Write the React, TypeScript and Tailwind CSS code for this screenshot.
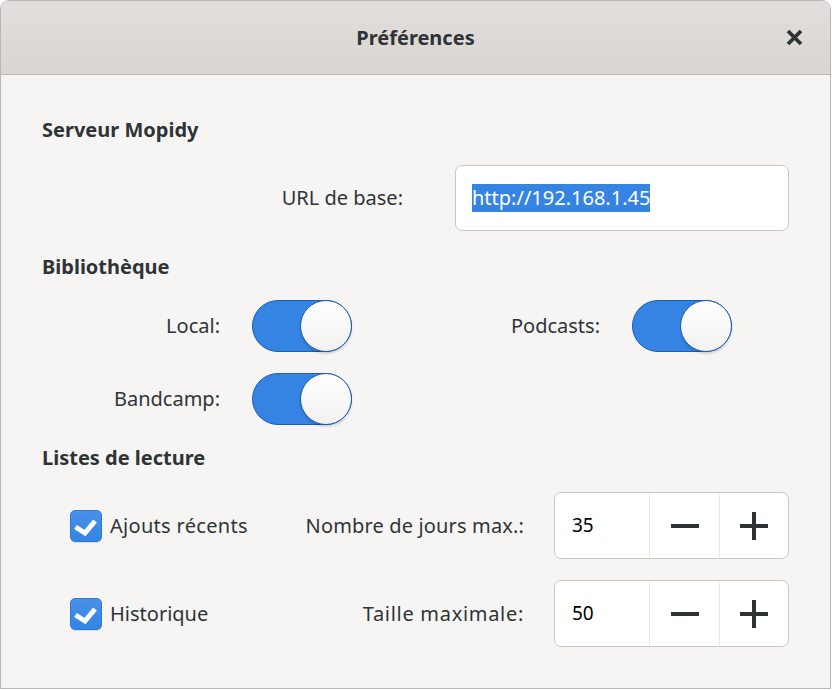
import React from "react";

const font = { fontFamily: '"Noto Sans", "Open Sans", sans-serif' };

function Switch() {
  return (
    <div className="relative w-[100px] h-[52px] rounded-full bg-[#3584e4] border border-[#1a5fb4] shrink-0">
      <div className="absolute right-[-1px] top-[-1px] w-[52px] h-[52px] rounded-full bg-gradient-to-b from-white to-[#f2f1f0] border border-[#1a5fb4] shadow-[0_2px_2px_rgba(0,0,0,0.15)]" />
    </div>
  );
}

function Check() {
  return (
    <div className="w-[32px] h-[32px] rounded-[5px] bg-gradient-to-b from-[#4a90e9] to-[#3584e4] border border-[#2f7bd8] shadow-[0_1px_1px_rgba(0,0,0,0.1)] shrink-0">
      <svg width="30" height="30" viewBox="0 0 30 30">
        <path d="M4.5 16 L14 22 L24 10" fill="none" stroke="white" strokeWidth="5" strokeLinejoin="miter" />
      </svg>
    </div>
  );
}

function Spin({ value }: { value: string }) {
  return (
    <div className="ml-[30px] w-[235px] h-[67px] flex rounded-[7px] border border-[#cdc7c2] bg-white overflow-hidden">
      <div className="w-[94px] flex items-center pl-[17px] text-[19px] text-black">{value}</div>
      <div className="w-[70px] border-l border-[#ebe9e7] flex items-center justify-center">
        <svg width="30" height="30" viewBox="0 0 30 30">
          <rect x="1" y="13" width="28" height="4" fill="#2e3436" />
        </svg>
      </div>
      <div className="flex-1 border-l border-[#ebe9e7] flex items-center justify-center">
        <svg width="30" height="30" viewBox="0 0 30 30">
          <rect x="1" y="13" width="28" height="4" fill="#2e3436" />
          <rect x="13" y="1" width="4" height="28" fill="#2e3436" />
        </svg>
      </div>
    </div>
  );
}

export default function App() {
  return (
    <div className="w-[832px] h-[690px] bg-white text-[#2e3436]" style={font}>
      <div className="w-[831px] h-[689px] border border-[#b9b7b4] rounded-t-[9px] overflow-hidden bg-[#f6f5f4] flex flex-col">
        {/* header */}
        <div className="relative h-[74px] shrink-0 border-b border-[#bfb8b1] bg-gradient-to-b from-[#e1dedb] to-[#dad6d2] flex items-center justify-center">
          <span className="text-[20px] font-bold">Préférences</span>
          <svg className="absolute left-[785px] top-[28px]" width="17" height="17" viewBox="0 0 17 17">
            <path d="M2 2 L15 15 M15 2 L2 15" stroke="#2e3436" strokeWidth="3.8" />
          </svg>
        </div>

        <div className="pl-[41px] pt-[41px] text-[20px]">
          <h3 className="h-[28px] leading-[28px] font-bold">Serveur Mopidy</h3>

          <div className="mt-[21px] flex items-center h-[66px]">
            <div className="w-[361px] text-right">URL de base:</div>
            <div className="ml-[52px] w-[334px] h-[66px] rounded-[7px] border border-[#cdc7c2] bg-white flex items-center pl-[16px]">
              <span className="bg-[#3584e4] text-white leading-[28px] text-[20px]">http://192.168.1.45</span>
            </div>
          </div>

          <h3 className="mt-[22px] h-[28px] leading-[28px] font-bold">Bibliothèque</h3>

          <div className="mt-[19px] flex items-center h-[52px]">
            <div className="w-[178px] text-right">Local:</div>
            <div className="ml-[32px]"><Switch /></div>
            <div className="w-[248px] text-right">Podcasts:</div>
            <div className="ml-[32px]"><Switch /></div>
          </div>

          <div className="mt-[21px] flex items-center h-[52px]">
            <div className="w-[178px] text-right">Bandcamp:</div>
            <div className="ml-[32px]"><Switch /></div>
          </div>

          <h3 className="mt-[19px] h-[28px] leading-[28px] font-bold">Listes de lecture</h3>

          <div className="mt-[20px] flex items-center h-[67px] pl-[28px]">
            <Check />
            <div className="ml-[8px] w-[414px] flex justify-between">
              <span className="tracking-[0.3px]">Ajouts récents</span>
              <span className="tracking-[0.15px]">Nombre de jours max.:</span>
            </div>
            <Spin value="35" />
          </div>

          <div className="mt-[21px] flex items-center h-[67px] pl-[28px]">
            <Check />
            <div className="ml-[8px] w-[414px] flex justify-between">
              <span>Historique</span>
              <span className="tracking-[0.7px]">Taille maximale:</span>
            </div>
            <Spin value="50" />
          </div>
        </div>
      </div>
    </div>
  );
}
